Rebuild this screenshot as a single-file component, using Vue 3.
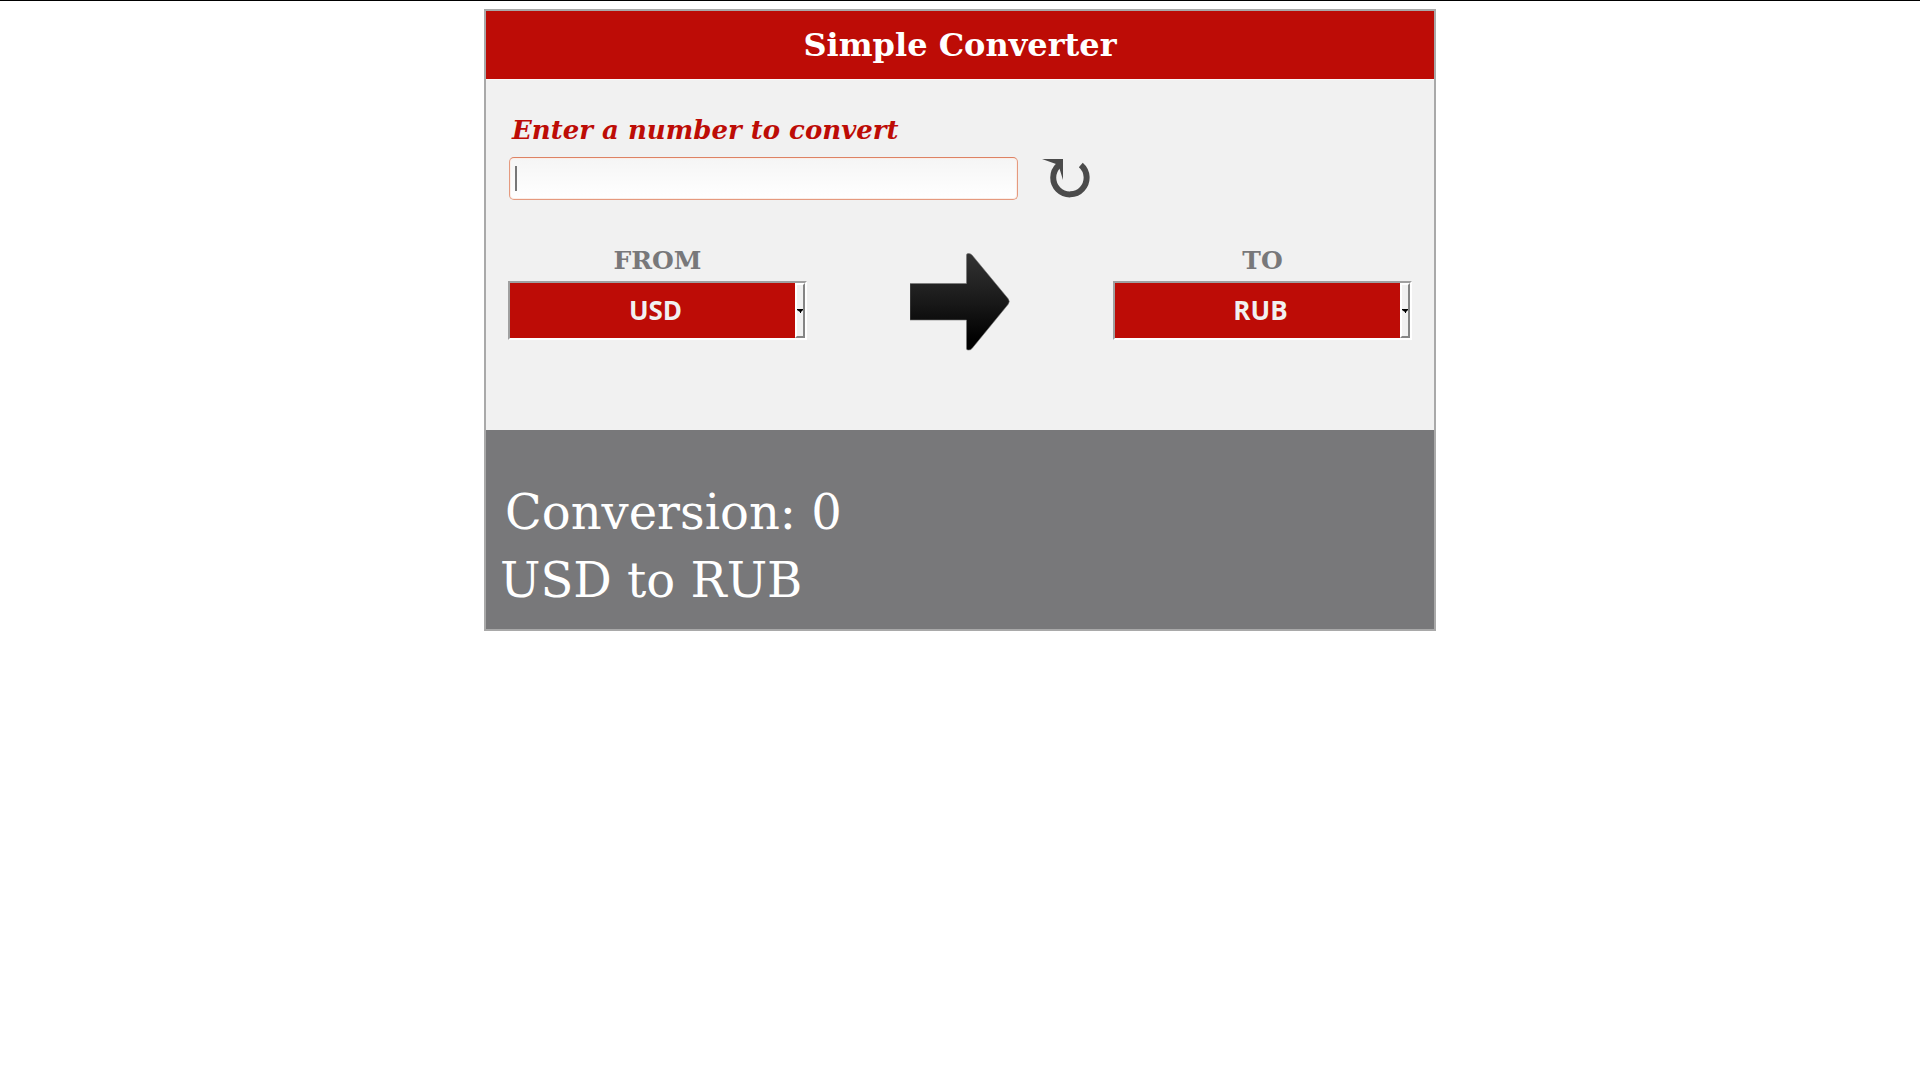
<script setup>
import { ref, computed } from 'vue'

const currencies = ['USD', 'RUB', 'EUR', 'GBP']
const rates = { USD: 1, RUB: 65, EUR: 0.9, GBP: 0.8 }

const amount = ref('')
const from = ref('USD')
const to = ref('RUB')

const result = computed(() => {
  const value = Number(amount.value) || 0
  return Math.round((value / rates[from.value]) * rates[to.value] * 100) / 100
})

function reset() {
  amount.value = ''
}
</script>

<template>
  <div class="page">
    <main class="converter">
      <header class="title-bar">
        <h1>Simple Converter</h1>
      </header>

      <section class="form">
        <label class="prompt" for="amount">Enter a number to convert</label>
        <div class="entry">
          <div class="field">
            <input id="amount" v-model="amount" type="text" />
            <span v-if="!amount" class="caret" aria-hidden="true"></span>
          </div>
          <button class="reset" type="button" aria-label="Reset" @click="reset">
            <svg width="48" height="40" viewBox="0 0 48 40" aria-hidden="true">
              <path d="M16.5 7.5A16.7 16.7 0 1 0 38.8 7" fill="none" stroke="#4b4b4b" stroke-width="6" />
              <path d="M0 1H21V22L17 9L14 6Z" fill="#4b4b4b" />
            </svg>
          </button>
        </div>

        <div class="currencies">
          <div class="currency">
            <label for="from">FROM</label>
            <div class="picker">
              <select id="from" v-model="from">
                <option v-for="c in currencies" :key="c">{{ c }}</option>
              </select>
              <span class="drop" aria-hidden="true">
                <svg width="6" height="4" viewBox="0 0 6 4"><path d="M0 0H6V1L4 3V4H3V3L0 1Z" /></svg>
              </span>
            </div>
          </div>

          <svg class="arrow" width="100" height="98" viewBox="0 0 100 98" aria-hidden="true">
            <defs>
              <linearGradient id="shade" x1="0" y1="0" x2="0" y2="1">
                <stop offset="0" stop-color="#333" />
                <stop offset="0.5" stop-color="#191919" />
                <stop offset="0.9" stop-color="#000" />
              </linearGradient>
            </defs>
            <path
              d="M0 30.5H56.5V2Q56.5 0.5 58 0.5H59Q60.5 0.5 62 2L98 45.5Q100.5 48.5 98 51.5L62 95.5Q60.5 97 59 97H58Q56.5 97 56.5 95.5V67H0Z"
              fill="url(#shade)"
              stroke="#777"
              stroke-opacity="0.6"
            />
          </svg>

          <div class="currency">
            <label for="to">TO</label>
            <div class="picker">
              <select id="to" v-model="to">
                <option v-for="c in currencies" :key="c">{{ c }}</option>
              </select>
              <span class="drop" aria-hidden="true">
                <svg width="6" height="4" viewBox="0 0 6 4"><path d="M0 0H6V1L4 3V4H3V3L0 1Z" /></svg>
              </span>
            </div>
          </div>
        </div>
      </section>

      <section class="result">
        <p class="value">Conversion: {{ result }}</p>
        <p>{{ from }} to {{ to }}</p>
      </section>
    </main>
  </div>
</template>

<style>
body {
  margin: 0;
  background: #fff;
}
</style>

<style scoped>
.page {
  padding-top: 8px;
  border-top: 1px solid #000;
  font-family: "DejaVu Serif", serif;
}

.converter {
  box-sizing: border-box;
  max-width: 952px;
  margin: 0 auto;
  border: 2px solid #a9a9a9;
  background: #f1f1f1;
}

.title-bar {
  background: #bd0c06;
  border-bottom: 1px solid #fafafa;
}

h1 {
  margin: 0;
  color: #fff;
  font-size: 32px;
  line-height: 68px;
  text-align: center;
}

.form {
  padding: 34px 22px 79px;
}

.prompt {
  display: block;
  padding-left: 4px;
  color: #bd0c06;
  font-size: 26px;
  font-style: italic;
  font-weight: bold;
  line-height: 32px;
}

.entry {
  display: flex;
  align-items: center;
  gap: 24px;
  margin-top: 11px;
  padding-left: 1px;
}

.field {
  position: relative;
  flex: 0 1 509px;
}

input {
  display: block;
  box-sizing: border-box;
  width: 100%;
  height: 43px;
  padding: 0 6px;
  border: 1px solid #e59a7f;
  border-top-color: #dd8264;
  border-radius: 5px;
  outline: none;
  background: linear-gradient(#f5f5f5, #fff);
  box-shadow: inset 0 0 0 1px #fbeee8;
  color: #78787a;
  font-family: inherit;
  font-size: 22px;
}

.caret {
  position: absolute;
  top: 9px;
  left: 6px;
  width: 2px;
  height: 25px;
  background: #777;
}

.field:focus-within .caret {
  display: none;
}

.reset {
  padding: 0 0 2px;
  border: 0;
  background: none;
  cursor: pointer;
}

.reset svg {
  display: block;
}

.currencies {
  display: flex;
  justify-content: space-between;
  align-items: flex-start;
  margin-top: 45px;
}

.currency {
  flex: 0 1 299px;
}

.currency label {
  display: block;
  color: #78787a;
  font-size: 25px;
  font-weight: bold;
  line-height: 32px;
  text-align: center;
}

.picker {
  position: relative;
  display: flex;
  box-sizing: border-box;
  height: 59px;
  margin-top: 4px;
  border: 2px solid;
  border-color: #a0a0a0 #fff #fff #a0a0a0;
}

select {
  flex: 1;
  margin: 0 10px 0 0;
  padding: 0 0 2px 6px;
  border: 0;
  border-radius: 0;
  appearance: none;
  background: #bd0c06;
  color: #f1f1f1;
  font-family: "Open Sans", "Noto Sans", sans-serif;
  font-size: 26px;
  font-weight: bold;
  text-align: center;
  text-align-last: center;
}

.drop {
  position: absolute;
  top: 0;
  right: 0;
  bottom: 0;
  display: flex;
  align-items: center;
  justify-content: center;
  box-sizing: border-box;
  width: 10px;
  border: 2px solid;
  border-color: #fff #858585 #858585 #fff;
  background: #f1f1f1;
  pointer-events: none;
}

.drop svg {
  flex: none;
}

.arrow {
  flex: none;
  padding-top: 8px;
}

.result {
  padding: 48px 14px 15px;
  background: #78787a;
  color: #fff;
  font-size: 48px;
  line-height: 68px;
}

.result p {
  margin: 0;
}

.result .value {
  padding-left: 5px;
}
</style>
